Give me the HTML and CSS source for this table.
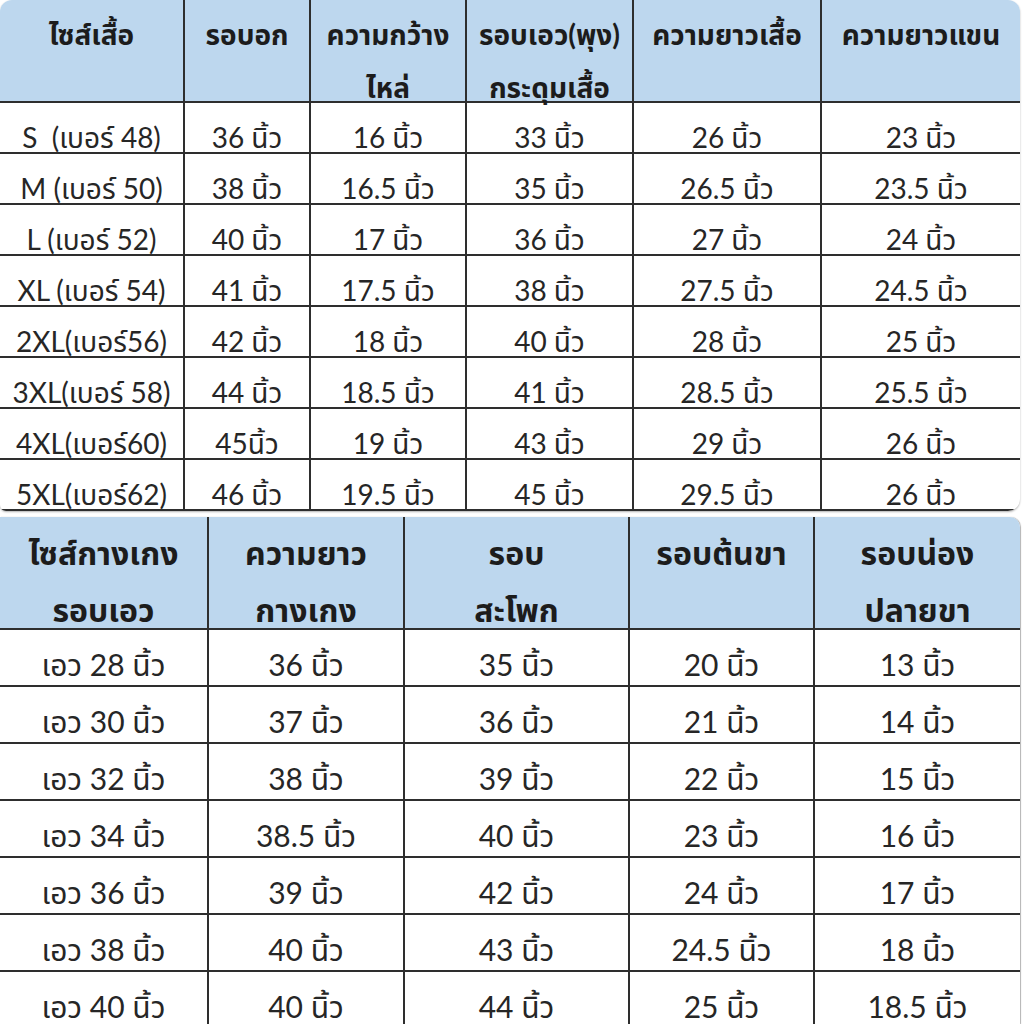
FILE: index.html
```html
<!DOCTYPE html>
<html lang="th">
<head>
<meta charset="utf-8">
<link rel="stylesheet" href="styles.css">
</head>
<body>
<div class="page">
  <div class="card card-top">
    <table class="grid grid-shirt">
      <colgroup>
        <col class="c183"><col class="c126"><col class="c156"><col class="c167"><col class="c188"><col class="c200">
      </colgroup>
      <thead>
        <tr>
          <th><div class="hd">ไซส์เสื้อ</div></th>
          <th><div class="hd">รอบอก</div></th>
          <th><div class="hd">ความกว้าง<br>ไหล่</div></th>
          <th><div class="hd">รอบเอว(พุง)<br>กระดุมเสื้อ</div></th>
          <th><div class="hd">ความยาวเสื้อ</div></th>
          <th><div class="hd">ความยาวแขน</div></th>
        </tr>
      </thead>
      <tbody>
        <tr><td class="pre">S  (เบอร์ 48)</td><td>36 นิ้ว</td><td>16 นิ้ว</td><td>33 นิ้ว</td><td>26 นิ้ว</td><td>23 นิ้ว</td></tr>
        <tr><td>M (เบอร์ 50)</td><td>38 นิ้ว</td><td>16.5 นิ้ว</td><td>35 นิ้ว</td><td>26.5 นิ้ว</td><td>23.5 นิ้ว</td></tr>
        <tr><td>L (เบอร์ 52)</td><td>40 นิ้ว</td><td>17 นิ้ว</td><td>36 นิ้ว</td><td>27 นิ้ว</td><td>24 นิ้ว</td></tr>
        <tr><td>XL (เบอร์ 54)</td><td>41 นิ้ว</td><td>17.5 นิ้ว</td><td>38 นิ้ว</td><td>27.5 นิ้ว</td><td>24.5 นิ้ว</td></tr>
        <tr><td>2XL(เบอร์56)</td><td>42 นิ้ว</td><td>18 นิ้ว</td><td>40 นิ้ว</td><td>28 นิ้ว</td><td>25 นิ้ว</td></tr>
        <tr><td>3XL(เบอร์ 58)</td><td>44 นิ้ว</td><td>18.5 นิ้ว</td><td>41 นิ้ว</td><td>28.5 นิ้ว</td><td>25.5 นิ้ว</td></tr>
        <tr><td>4XL(เบอร์60)</td><td>45นิ้ว</td><td>19 นิ้ว</td><td>43 นิ้ว</td><td>29 นิ้ว</td><td>26 นิ้ว</td></tr>
        <tr><td>5XL(เบอร์62)</td><td>46 นิ้ว</td><td>19.5 นิ้ว</td><td>45 นิ้ว</td><td>29.5 นิ้ว</td><td>26 นิ้ว</td></tr>
      </tbody>
    </table>
  </div>
  <div class="card card-bottom">
    <table class="grid grid-pants">
      <colgroup>
        <col class="c207"><col class="c196"><col class="c225"><col class="c185"><col class="c207">
      </colgroup>
      <thead>
        <tr>
          <th><div class="hd">ไซส์กางเกง<br>รอบเอว</div></th>
          <th><div class="hd">ความยาว<br>กางเกง</div></th>
          <th><div class="hd">รอบ<br>สะโพก</div></th>
          <th><div class="hd">รอบต้นขา</div></th>
          <th><div class="hd">รอบน่อง<br>ปลายขา</div></th>
        </tr>
      </thead>
      <tbody>
        <tr><td>เอว 28 นิ้ว</td><td>36 นิ้ว</td><td>35 นิ้ว</td><td>20 นิ้ว</td><td>13 นิ้ว</td></tr>
        <tr><td>เอว 30 นิ้ว</td><td>37 นิ้ว</td><td>36 นิ้ว</td><td>21 นิ้ว</td><td>14 นิ้ว</td></tr>
        <tr><td>เอว 32 นิ้ว</td><td>38 นิ้ว</td><td>39 นิ้ว</td><td>22 นิ้ว</td><td>15 นิ้ว</td></tr>
        <tr><td>เอว 34 นิ้ว</td><td>38.5 นิ้ว</td><td>40 นิ้ว</td><td>23 นิ้ว</td><td>16 นิ้ว</td></tr>
        <tr><td>เอว 36 นิ้ว</td><td>39 นิ้ว</td><td>42 นิ้ว</td><td>24 นิ้ว</td><td>17 นิ้ว</td></tr>
        <tr><td>เอว 38 นิ้ว</td><td>40 นิ้ว</td><td>43 นิ้ว</td><td>24.5 นิ้ว</td><td>18 นิ้ว</td></tr>
        <tr><td>เอว 40 นิ้ว</td><td>40 นิ้ว</td><td>44 นิ้ว</td><td>25 นิ้ว</td><td>18.5 นิ้ว</td></tr>
      </tbody>
    </table>
  </div>
</div>
</body>
</html>
```
FILE: styles.css
```css
html, body {
  margin: 0;
  padding: 0;
  background: #ffffff;
}
.page {
  width: 1024px;
  height: 1024px;
  overflow: hidden;
  display: flex;
  flex-direction: column;
  gap: 6px;
}
.card {
  width: 1020px;
  background: #ffffff;
  overflow: hidden;
  flex: none;
}
.card-top {
  border-radius: 12px 12px 12px 6px;
  box-shadow: 0 1px 2px rgba(0,0,0,0.3);
}
.card-bottom {
  border-radius: 0 10px 0 0;
  box-shadow: 1px 0 1px rgba(0,0,0,0.3);
  flex: 1;
}
.grid {
  width: 1020px;
  table-layout: fixed;
  border-collapse: separate;
  border-spacing: 0;
  font-family: "Lato", "Noto Sans Thai", "Leelawadee UI", "Tahoma", "Loma", "Garuda", sans-serif;
  color: #262626;
}
.c183 { width: 183px; }
.c126 { width: 126px; }
.c156 { width: 156px; }
.c167 { width: 167px; }
.c188 { width: 188px; }
.c200 { width: 200px; }
.c207 { width: 207px; }
.c196 { width: 196px; }
.c225 { width: 225px; }
.c185 { width: 185px; }
.grid th {
  background: #bdd7ee;
  font-weight: 700;
  color: #1c1c1c;
  vertical-align: top;
  text-align: center;
  padding: 0;
  border-left: 2px solid #2e2e2e;
  border-bottom: 2px solid #2e2e2e;
  white-space: nowrap;
}
.grid td {
  text-align: center;
  vertical-align: top;
  white-space: nowrap;
  border-left: 2px solid #2e2e2e;
  border-bottom: 2px solid #2e2e2e;
}
.grid th:first-child,
.grid td:first-child {
  border-left: none;
}
.grid td.pre {
  white-space: pre;
}
.hd {
  box-sizing: border-box;
}
.grid-shirt .hd {
  height: 101px;
  padding-top: 8px;
  font-size: 28px;
  line-height: 53px;
}
.grid-shirt td {
  font-size: 28px;
  line-height: 29px;
  padding: 20px 0 0 0;
}
.grid-pants .hd {
  height: 111px;
  padding-top: 7px;
  font-size: 32px;
  line-height: 57px;
}
.grid-pants td {
  font-size: 30px;
  line-height: 40px;
  padding: 14px 0 1px 0;
}
```
